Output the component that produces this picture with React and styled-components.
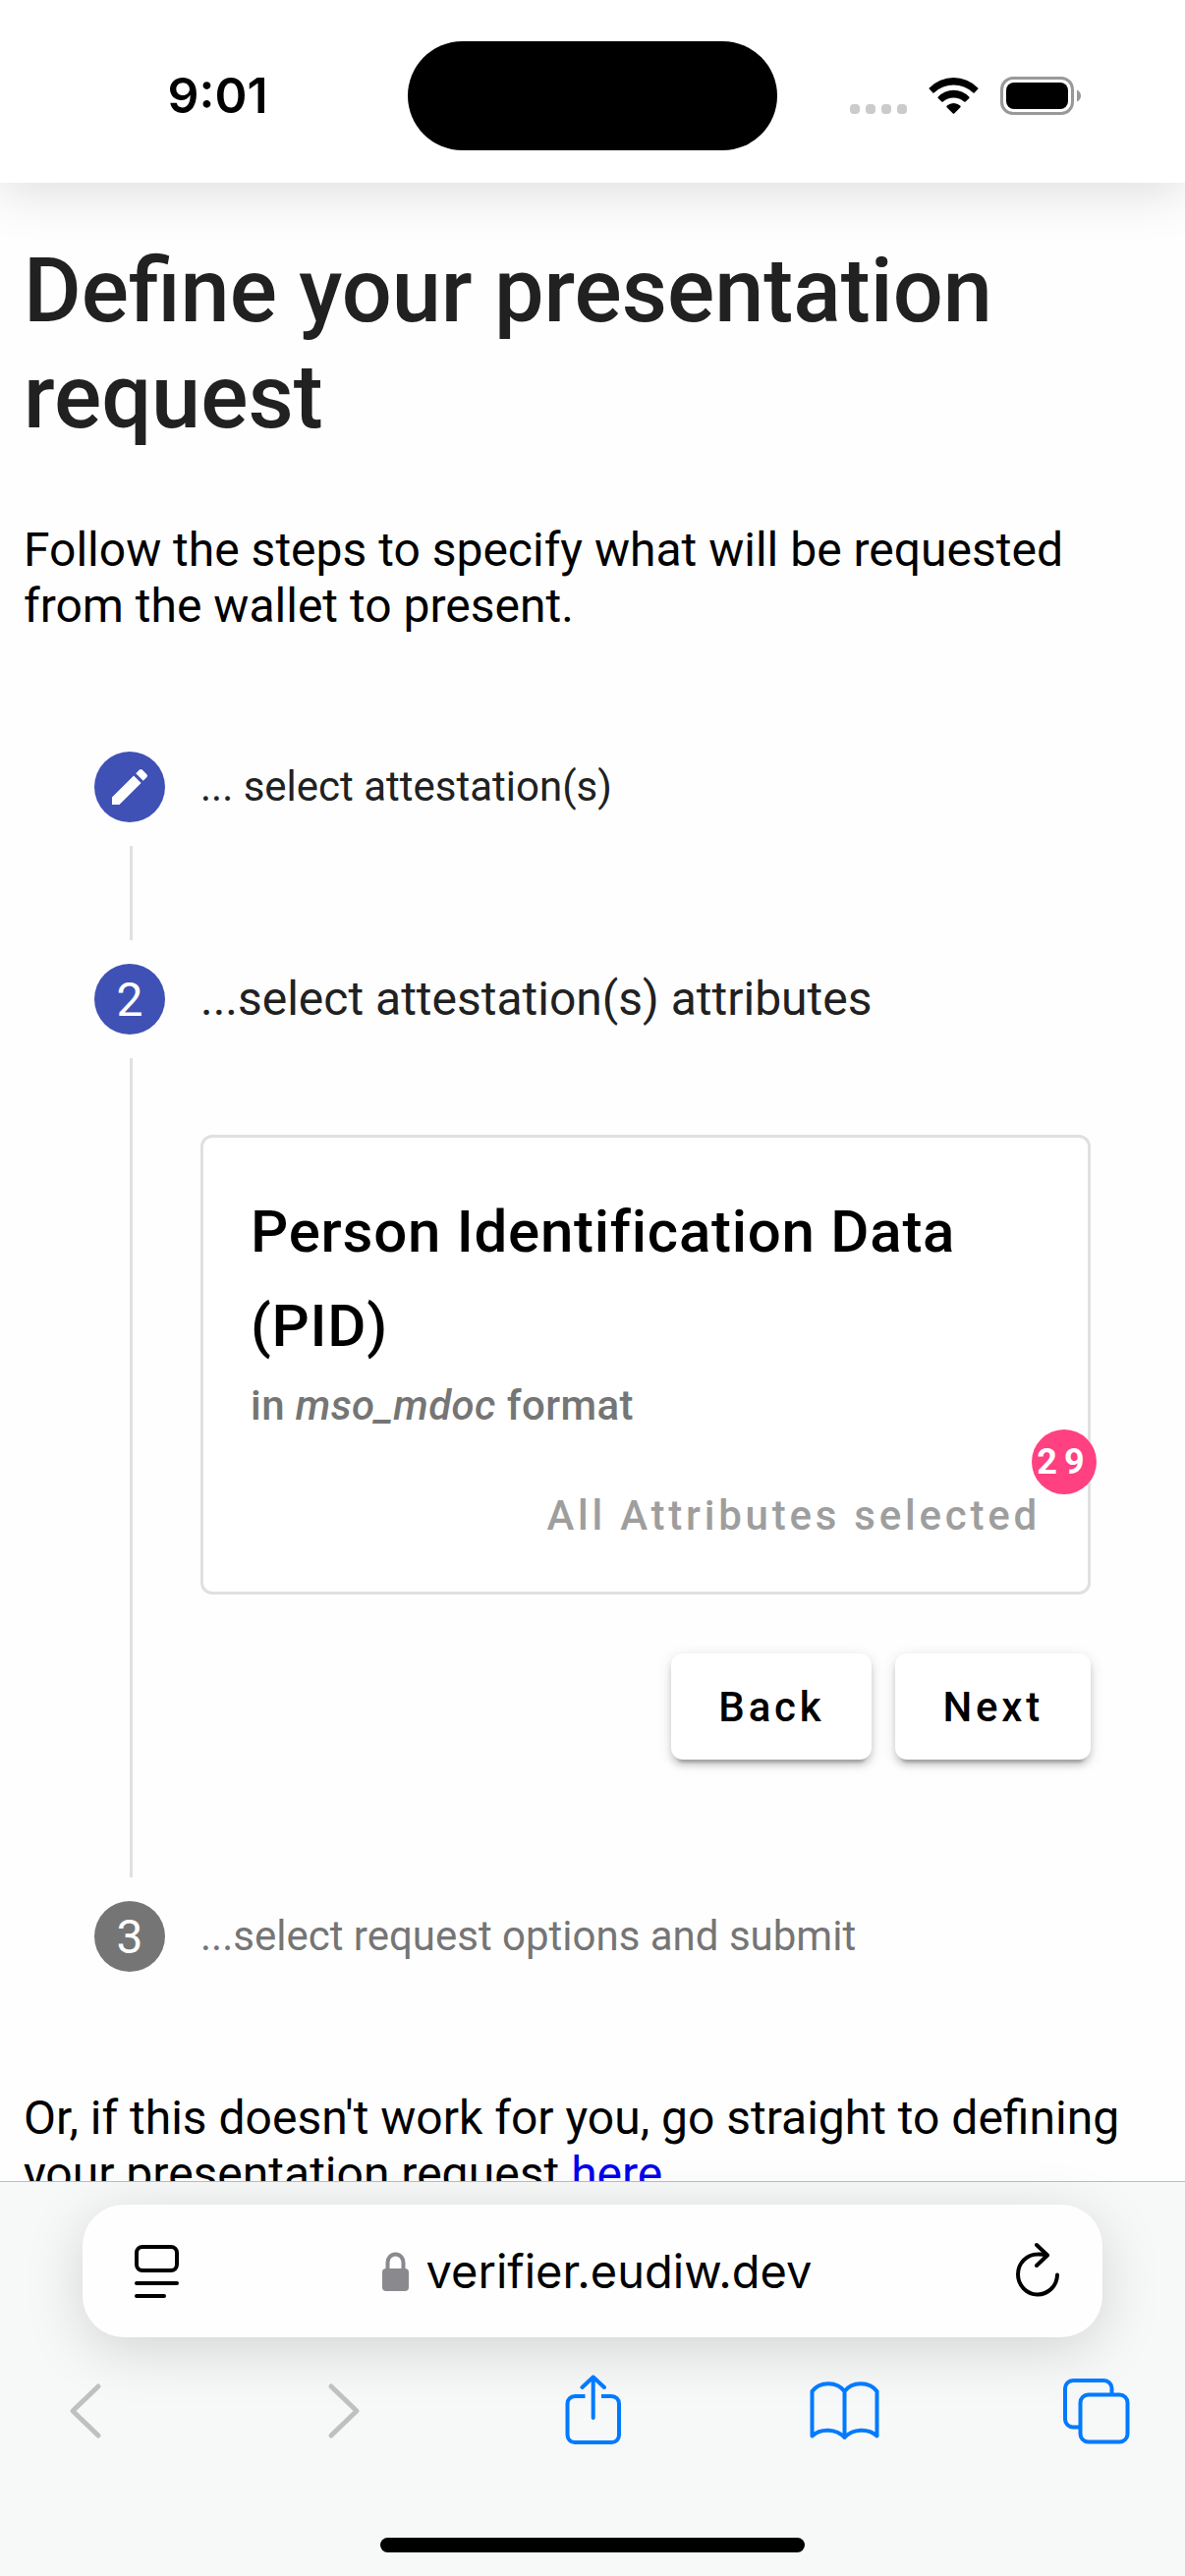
import React from 'react';
import styled, { createGlobalStyle, css } from 'styled-components';

const GlobalStyle = createGlobalStyle`
  *, *::before, *::after { box-sizing: border-box; }
  html, body, #root { height: 100%; }
  body {
    margin: 0;
    background: #fefefe;
    color: #000;
    font-family: Roboto, "Liberation Sans", sans-serif;
    font-size: 48px;
  }
  svg { display: block; }
`;

const Screen = styled.div`
  height: 100vh;
  display: flex;
  flex-direction: column;
  overflow: hidden;
`;

const StatusBar = styled.header`
  flex: none;
  z-index: 1;
  display: grid;
  grid-template-columns: 1fr 376px 1fr;
  align-items: center;
  height: 186px;
  padding-top: 8px;
  background: #fff;
  box-shadow: 0 12px 48px rgba(0, 0, 0, 0.12);
`;

const Clock = styled.time`
  padding-left: 28px;
  text-align: center;
  font: 600 50px/60px Inter, "Liberation Sans", sans-serif;
`;

const Island = styled.div`
  height: 111px;
  border-radius: 56px;
  background: #000;
`;

const StatusIcons = styled.div`
  display: flex;
  align-items: center;
  gap: 22px;
  padding-left: 74px;
`;

const Page = styled.main`
  flex: 1;
  min-height: 0;
  overflow: hidden;
  padding: 57px 24px 0;
`;

const Title = styled.h1`
  margin: 0;
  color: #212121;
  font-size: 90px;
  font-weight: 500;
  line-height: 108px;
`;

const Paragraph = styled.p`
  margin: 72px 0 0;
  line-height: 57px;
`;

const Stepper = styled.ol`
  list-style: none;
  margin: 120px 72px;
  padding: 0;
`;

const Step = styled.li`
  display: grid;
  grid-template-columns: 72px 1fr;
  column-gap: 36px;
  align-items: center;
  row-gap: 24px;
`;

const Marker = styled.span`
  display: flex;
  align-items: center;
  justify-content: center;
  width: 72px;
  height: 72px;
  border-radius: 50%;
  color: #fff;
  background: ${(p) => (p.$pending ? '#757575' : '#3f51b5')};
`;

const StepLabel = styled.span`
  color: ${(p) => (p.$pending ? '#757575' : '#212121')};
  font-size: ${(p) => (p.$active ? 48 : 42)}px;
  line-height: 72px;
`;

const Connector = styled.div`
  align-self: stretch;
  width: 3px;
  min-height: 96px;
  margin: 0 0 24px 36px;
  background: #e0e0e0;
`;

const StepContent = styled.div`
  padding: 78px 0 144px;
`;

const Card = styled.section`
  border: 3px solid #e0e0e0;
  border-radius: 12px;
  background: #fff;
`;

const CardHeader = styled.div`
  padding: 48px 48px 0;
`;

const CardTitle = styled.h2`
  margin: 0;
  font-size: 60px;
  font-weight: 500;
  line-height: 96px;
  letter-spacing: 0.0125em;
`;

const CardSubtitle = styled.p`
  margin: 0;
  color: #757575;
  font-size: 42px;
  font-weight: 500;
  line-height: 66px;
  letter-spacing: 0.01em;
`;

const CardActions = styled.div`
  display: flex;
  justify-content: flex-end;
  padding: 24px;
`;

const buttonBase = css`
  height: 108px;
  border: 0;
  border-radius: 12px;
  font-family: inherit;
  font-size: 42px;
  font-weight: 500;
  letter-spacing: 0.09em;
`;

const AttributesButton = styled.button`
  ${buttonBase}
  position: relative;
  padding: 0 24px;
  background: transparent;
  color: #9e9e9e;
`;

const Badge = styled.span`
  position: absolute;
  top: -33px;
  right: -33px;
  width: 66px;
  height: 66px;
  border-radius: 50%;
  background: #ff4081;
  color: #fff;
  font-size: 36px;
  font-weight: 700;
  line-height: 66px;
  letter-spacing: 0.2em;
  text-align: center;
`;

const ButtonRow = styled.div`
  display: flex;
  justify-content: flex-end;
  gap: 24px;
  margin-top: 60px;
`;

const RaisedButton = styled.button`
  ${buttonBase}
  padding: 0 48px;
  background: #fff;
  color: #000;
  box-shadow: 0 9px 3px -6px rgba(0, 0, 0, 0.2), 0 6px 6px rgba(0, 0, 0, 0.14),
    0 3px 15px rgba(0, 0, 0, 0.12);
`;

const Link = styled.a`
  color: #0000ee;
`;

const BrowserBar = styled.footer`
  flex: none;
  display: flex;
  flex-direction: column;
  height: 402px;
  padding-top: 23px;
  border-top: 1px solid #bcbdbd;
  background: #f7f8f8;
`;

const AddressBar = styled.div`
  display: grid;
  grid-template-columns: 1fr auto 1fr;
  align-items: center;
  height: 135px;
  margin: 0 84px;
  padding: 0 44px 0 53px;
  border-radius: 42px;
  background: #fefefe;
  box-shadow: 0 12px 60px rgba(0, 0, 0, 0.15);
`;

const IconButton = styled.button`
  display: flex;
  justify-self: ${(p) => (p.$end ? 'end' : 'start')};
  padding: 0;
  border: 0;
  background: none;
  color: ${(p) => p.$color || '#000'};
`;

const Address = styled.span`
  display: flex;
  align-items: center;
  gap: 18px;
  font: 400 47px/60px Inter, "Liberation Sans", sans-serif;
`;

const Toolbar = styled.nav`
  display: flex;
  justify-content: space-between;
  align-items: center;
  padding: 38px 54px 0 51px;
`;

const HomeIndicator = styled.div`
  width: 432px;
  height: 15px;
  margin: auto auto 24px;
  border-radius: 8px;
  background: #000;
`;

const Signal = () => (
  <svg width="58" height="40" viewBox="0 0 58 40" fill="#cbcbcb" aria-hidden="true">
    {[0, 16, 32, 48].map((x) => (
      <rect key={x} x={x} y="29" width="10" height="10" rx="4" />
    ))}
  </svg>
);

const Wifi = () => (
  <svg width="51" height="40" viewBox="0 0 51 40" aria-hidden="true">
    <path d="M.7 13.6Q0 13 .8 12.4A34.4 34.4 0 0 1 50.2 12.4Q51 13 50.4 13.6L46.6 17.4Q46 18 45.2 17.3A28.8 28.8 0 0 0 5.8 17.3Q5 18 4.4 17.4Z" />
    <path d="M9.7 22.9Q9 22.3 9.8 21.6A21.5 21.5 0 0 1 41.2 21.6Q42 22.3 41.4 22.9L37.6 26.5Q37 27 36.2 26.4A16.6 16.6 0 0 0 14.8 26.4Q14 27 13.4 26.5Z" />
    <path d="M18.6 32.2Q17.8 31.4 18.8 30.6A10 10 0 0 1 32.2 30.6Q33.2 31.4 32.4 32.2L26.2 38.4Q25.5 39 24.8 38.4Z" />
  </svg>
);

const Battery = () => (
  <svg width="82" height="40" viewBox="0 0 82 40" aria-hidden="true">
    <rect x="1.5" y="2.5" width="72" height="36" rx="11.5" fill="none" stroke="#999" strokeWidth="3" />
    <rect x="6" y="7" width="63" height="27" rx="8" />
    <path d="M78 14.5Q82 16.5 82 20.5T78 26.5Z" fill="#999" />
  </svg>
);

const Pencil = () => (
  <svg width="48" height="48" viewBox="0 0 24 24" fill="currentColor" aria-hidden="true">
    <path d="M3 17.25V21h3.75L17.81 9.94l-3.75-3.75L3 17.25zM20.71 7.04a1 1 0 0 0 0-1.41l-2.34-2.34a1 1 0 0 0-1.41 0l-1.83 1.83 3.75 3.75 1.83-1.83z" />
  </svg>
);

const ReaderIcon = () => (
  <svg width="45" height="54" viewBox="0 0 45 54" fill="none" stroke="currentColor" strokeWidth="4" strokeLinecap="round" aria-hidden="true">
    <rect x="2" y="2" width="41" height="24" rx="6" />
    <path d="M2 39h41M2 52h28" />
  </svg>
);

const LockIcon = () => (
  <svg width="27" height="40" viewBox="0 0 27 40" aria-hidden="true">
    <rect y="17" width="27" height="23" rx="4" fill="#8a8a8e" />
    <path d="M5.5 18V11a8 8.6 0 0 1 16 0V18" fill="none" stroke="#8a8a8e" strokeWidth="4" />
  </svg>
);

const ReloadIcon = () => (
  <svg width="44" height="60" viewBox="0 0 44 60" fill="none" stroke="currentColor" strokeWidth="4" strokeLinecap="round" strokeLinejoin="round" aria-hidden="true">
    <path d="M42 33.5A20 20.5 0 1 1 22 12.500Q27 12.300 31 13.500" />
    <path d="M21 3L32 13.500L21 24" />
  </svg>
);

const ToolIcon = ({ width = 4, children }) => (
  <svg width="72" height="72" viewBox="0 0 72 72" fill="none" stroke="currentColor" strokeWidth={width} strokeLinecap="round" strokeLinejoin="round" aria-hidden="true">
    {children}
  </svg>
);

const blue = '#007aff';
const disabled = '#c0c0c0';

export default function App() {
  return (
    <>
      <GlobalStyle />
      <Screen>
        <StatusBar>
          <Clock>9:01</Clock>
          <Island />
          <StatusIcons>
            <Signal />
            <Wifi />
            <Battery />
          </StatusIcons>
        </StatusBar>
        <Page>
          <Title>Define your presentation request</Title>
          <Paragraph>Follow the steps to specify what will be requested from the wallet to present.</Paragraph>
          <Stepper>
            <Step>
              <Marker>
                <Pencil />
              </Marker>
              <StepLabel>... select attestation(s)</StepLabel>
              <Connector />
            </Step>
            <Step>
              <Marker>2</Marker>
              <StepLabel $active>...select attestation(s) attributes</StepLabel>
              <Connector />
              <StepContent>
                <Card>
                  <CardHeader>
                    <CardTitle>Person Identification Data (PID)</CardTitle>
                    <CardSubtitle>
                      in <em>mso_mdoc</em> format
                    </CardSubtitle>
                  </CardHeader>
                  <CardActions>
                    <AttributesButton type="button">
                      All Attributes selected
                      <Badge>29</Badge>
                    </AttributesButton>
                  </CardActions>
                </Card>
                <ButtonRow>
                  <RaisedButton type="button">Back</RaisedButton>
                  <RaisedButton type="button">Next</RaisedButton>
                </ButtonRow>
              </StepContent>
            </Step>
            <Step>
              <Marker $pending>3</Marker>
              <StepLabel $pending>...select request options and submit</StepLabel>
            </Step>
          </Stepper>
          <Paragraph>
            Or, if this doesn't work for you, go straight to defining your presentation request{' '}
            <Link href="#here">here</Link>
          </Paragraph>
        </Page>
        <BrowserBar>
          <AddressBar>
            <IconButton type="button" aria-label="Page menu">
              <ReaderIcon />
            </IconButton>
            <Address>
              <LockIcon />
              verifier.eudiw.dev
            </Address>
            <IconButton type="button" aria-label="Reload" $end>
              <ReloadIcon />
            </IconButton>
          </AddressBar>
          <Toolbar>
            <IconButton type="button" aria-label="Back" $color={disabled}>
              <ToolIcon width={5}>
                <path d="M49 12L23 37L49 62" />
              </ToolIcon>
            </IconButton>
            <IconButton type="button" aria-label="Forward" $color={disabled}>
              <ToolIcon width={5}>
                <path d="M29 12L55 37L29 62" />
              </ToolIcon>
            </IconButton>
            <IconButton type="button" aria-label="Share" $color={blue}>
              <ToolIcon>
                <path d="M29.500 22H19a7.500 7.500 0 0 0-7.500 7.500V61.500A7.500 7.500 0 0 0 19 69H56.500A7.500 7.500 0 0 0 64 61.500V29.500A7.500 7.500 0 0 0 56.500 22H46" strokeLinecap="butt" />
                <path d="M37.700 44V2.500M26.500 13L37.700 2.500L49 13" />
              </ToolIcon>
            </IconButton>
            <IconButton type="button" aria-label="Bookmarks" $color={blue}>
              <ToolIcon>
                <path d="M36.500 17C29 6.500 11 6.500 3.500 17V62.500C12 54.500 28 54.500 36.500 64C45 54.500 61 54.500 69.500 62.500V17C62 6.500 44 6.500 36.500 17ZV64" />
              </ToolIcon>
            </IconButton>
            <IconButton type="button" aria-label="Tabs" $color={blue}>
              <ToolIcon>
                <path d="M19 53.500H12A8 8 0 0 1 4 45.500V14A8 8 0 0 1 12 6H43.500A8 8 0 0 1 51.500 14V20.500" strokeLinecap="butt" />
                <rect x="19.500" y="20.500" width="48" height="48" rx="8" />
              </ToolIcon>
            </IconButton>
          </Toolbar>
          <HomeIndicator />
        </BrowserBar>
      </Screen>
    </>
  );
}
